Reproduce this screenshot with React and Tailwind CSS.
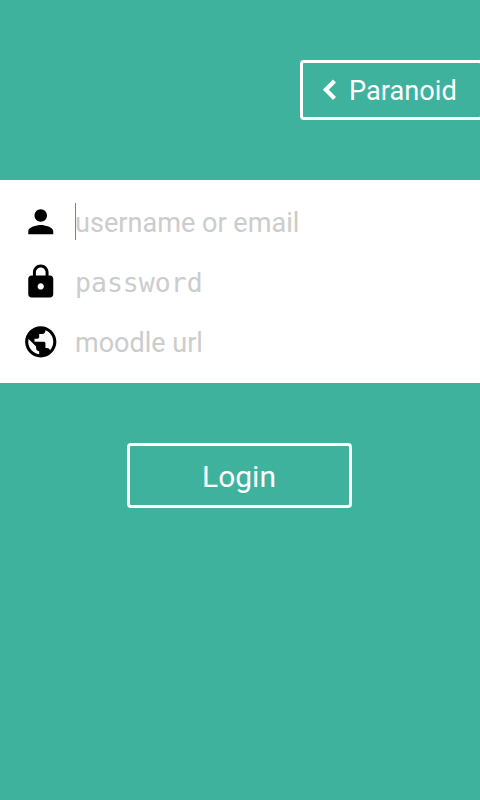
import React from "react";
import { MdPerson, MdLock, MdPublic } from "react-icons/md";

function Field({ icon: Icon, label, caret, className }) {
  return (
    <div className="flex h-[60px] items-center">
      <Icon className="mb-px ml-[22px] size-[37.5px] shrink-0 text-black" />
      <div className="ml-[15.5px] flex items-center">
        {caret && <span className="-mr-px h-[37px] w-px bg-[#808080]" />}
        <span className={className}>{label}</span>
      </div>
    </div>
  );
}

export default function App() {
  return (
    <div className="flex h-[800px] w-[480px] flex-col overflow-hidden bg-[#3eb29d] font-['Roboto',sans-serif]">
      <div className="flex h-[180px] shrink-0 justify-end pt-[60px]">
        <button className="-mr-[3px] flex h-[60px] w-[183px] items-center rounded-[4px] border-[3px] border-white text-[27.2px] text-white">
          <svg className="ml-[20px] h-[22px] w-[14px] shrink-0" viewBox="0 0 14 22" fill="none" stroke="currentColor" strokeWidth="4.2">
            <path d="M11.5 2 2.8 10.7l8.7 8.7" />
          </svg>
          <span className="ml-[12px] pt-[2px]">Paranoid</span>
        </button>
      </div>
      <div className="h-[203px] shrink-0 bg-white pt-[12px]">
        <Field icon={MdPerson} label="username or email" caret className="pt-[2px] text-[27.1px] text-[#cccccc]" />
        <Field icon={MdLock} label="password" className="pt-[2px] font-['DejaVu_Sans_Mono',monospace] text-[26.5px] text-[#cccccc]" />
        <Field icon={MdPublic} label="moodle url" className="pt-[2px] text-[27px] text-[#cccccc]" />
      </div>
      <button className="mt-[60px] ml-[127px] h-[65px] w-[225px] rounded-[4px] border-[3px] border-white pt-[2px] pr-px text-[30px] text-white">
        Login
      </button>
    </div>
  );
}
